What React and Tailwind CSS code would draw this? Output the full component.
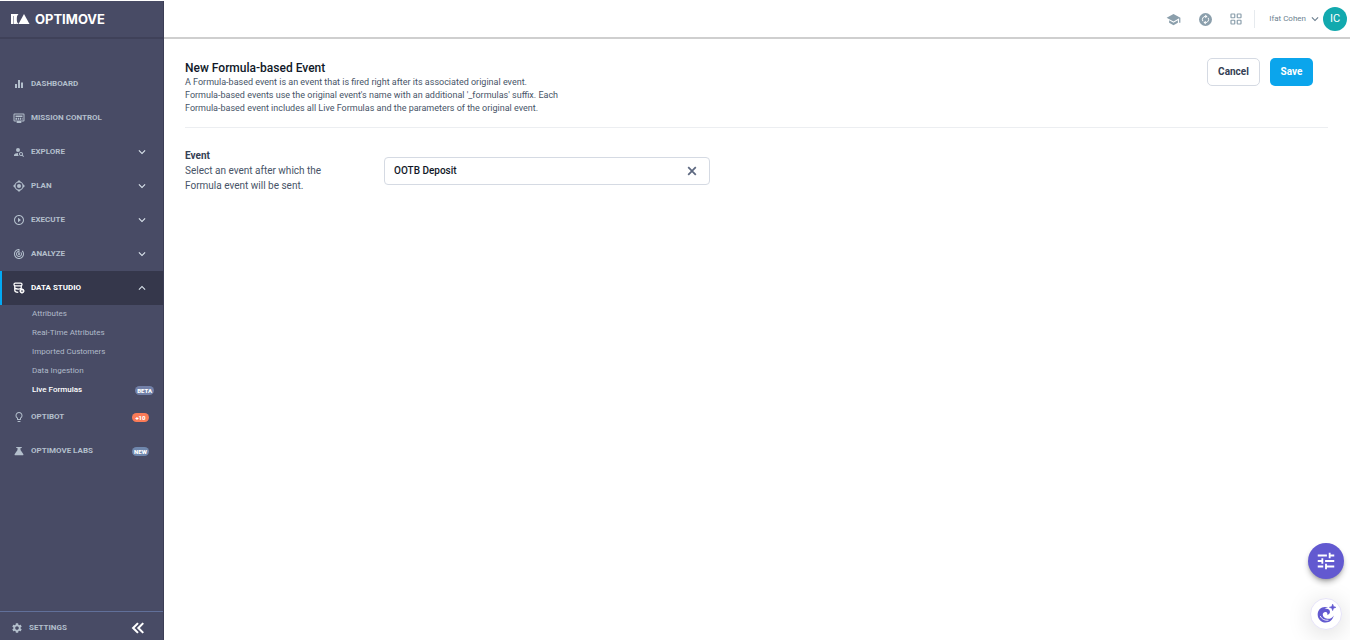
import { useState } from 'react';
import {
  MdEqualizer,
  MdKeyboardArrowDown,
  MdKeyboardArrowUp,
  MdLightbulbOutline,
  MdPersonSearch,
  MdPlayCircleOutline,
  MdSchool,
  MdSettings,
  MdTrackChanges,
  MdTune,
} from 'react-icons/md';

const MonitorIcon = ({ className }) => (
  <svg viewBox="0 0 24 24" className={className} fill="currentColor">
    <path
      fillRule="evenodd"
      d="M3 3h18a2 2 0 0 1 2 2v12a2 2 0 0 1-2 2h-5l1 3H7l1-3H3a2 2 0 0 1-2-2V5a2 2 0 0 1 2-2Zm0 2v12h18V5H3Z"
    />
    <path d="M5 7h14v3H5zM5 11.500h3.500v4H5zM10 11.500h2.500v4H10zM14 11.500h2v4h-2zM17.500 11.500H19v4h-1.500z" />
  </svg>
);

const TargetIcon = ({ className }) => (
  <svg viewBox="0 0 24 24" className={className} fill="currentColor">
    <circle cx="12" cy="12" r="4" />
    <circle cx="12" cy="12" r="8" fill="none" stroke="currentColor" strokeWidth="2.200" />
    <path d="M12 0l3.500 4h-7zM12 24l3.500-4h-7zM0 12l4-3.500v7zM24 12l-4-3.500v7z" />
  </svg>
);

const DatabaseGearIcon = ({ className }) => (
  <svg viewBox="0 0 24 24" className={className} fill="none" stroke="currentColor" strokeWidth="2.500">
    <rect x="2" y="2" width="16" height="5.500" rx="2.500" />
    <path d="M3.500 7.500v9c0 2.500 2.500 4 7 4M3.500 12c1 1.300 3.500 2 7 2 2.500 0 4.500-.4 6-1.200V7.500" />
    <circle cx="18" cy="18" r="3" strokeWidth="2.600" />
    <path
      d="M18 12.500v2M18 21.500v2M12.500 18h2M21.500 18h2M14.100 14.100l1.400 1.400M20.500 20.500l1.400 1.400M14.100 21.900l1.400-1.400M20.500 15.500l1.400-1.400"
      strokeWidth="2"
    />
  </svg>
);

const FlaskIcon = ({ className }) => (
  <svg viewBox="0 0 24 24" className={className} fill="currentColor">
    <path d="M6.500 4h11v2h-2.500v4l5.500 8c.9 1.300.4 2.500-1.200 2.500H4.700c-1.600 0-2.100-1.200-1.200-2.500L9 10V6H6.500z" />
  </svg>
);

const SyncCircleIcon = ({ className }) => (
  <svg viewBox="0 0 24 24" className={className} fill="currentColor">
    <circle cx="12" cy="12" r="12" />
    <g fill="none" stroke="white" strokeWidth="1.800">
      <path d="M7.200 15.200A5.800 5.800 0 0 1 12 6.200M16.800 8.800A5.800 5.800 0 0 1 12 17.800" />
    </g>
    <path d="M11.500 2.800l4.200 3.500-4.200 3.500zM12.500 14.200v7l-4.200-3.500z" fill="white" />
  </svg>
);

const GridIcon = ({ className }) => (
  <svg viewBox="0 0 24 24" className={className} fill="none" stroke="currentColor" strokeWidth="2.400">
    <rect x="2" y="2" width="7.500" height="7.500" rx="1" />
    <rect x="14.500" y="2" width="7.500" height="7.500" rx="1" />
    <rect x="2" y="14.500" width="7.500" height="7.500" rx="1" />
    <rect x="14.500" y="14.500" width="7.500" height="7.500" rx="1" />
  </svg>
);

const CloseIcon = ({ className }) => (
  <svg viewBox="0 0 24 24" className={className} fill="none" stroke="currentColor" strokeWidth="3">
    <path d="M5.500 5.500l13 13M18.500 5.500l-13 13" />
  </svg>
);

const CollapseIcon = ({ className }) => (
  <svg viewBox="0 0 24 24" className={className} fill="none" stroke="currentColor" strokeWidth="2.800">
    <path d="M12 5.500L5.500 12l6.500 6.500M19 5.500L12.500 12l6.500 6.500" />
  </svg>
);

const SwirlIcon = ({ className }) => (
  <svg viewBox="0 0 24 24" className={className} fill="currentColor">
    <path d="M14.500 4.300C8 1.800 2 6 2 12.500 2 18 6.300 22.200 11.600 22.200c5 0 8.800-3.400 9.600-8.400-1.500 2.800-4.200 4.300-7.400 4-3.600-.3-5.800-2.700-5.700-5.200.1-2 1.700-3.200 3.500-3 1.800.2 2.600 1.900 1.700 3.400 2.300-.3 3.700-2 3.400-4-.2-2-1.900-3.300-4.200-3.300-.8 0-1.600.1-2.300.4 1-1 2.500-1.700 4.300-1.800Z" />
    <path d="M5.200 14.800c1.500 3.400 5 5.200 9.300 4.700" fill="none" stroke="white" strokeWidth="1" strokeLinecap="round" />
    <path d="M20 0l1.100 2.900L24 4l-2.900 1.100L20 8l-1.100-2.900L16 4l2.900-1.100z" stroke="currentColor" strokeWidth=".6" />
  </svg>
);

const navItems = [
  { label: 'DASHBOARD', icon: MdEqualizer },
  { label: 'MISSION CONTROL', icon: MonitorIcon },
  { label: 'EXPLORE', icon: MdPersonSearch, expandable: true },
  { label: 'PLAN', icon: TargetIcon, expandable: true },
  { label: 'EXECUTE', icon: MdPlayCircleOutline, expandable: true },
  { label: 'ANALYZE', icon: MdTrackChanges, expandable: true },
  {
    label: 'DATA STUDIO',
    icon: DatabaseGearIcon,
    expandable: true,
    active: true,
    children: [
      { label: 'Attributes' },
      { label: 'Real-Time Attributes' },
      { label: 'Imported Customers' },
      { label: 'Data Ingestion' },
      { label: 'Live Formulas', active: true, badge: 'BETA' },
    ],
  },
  { label: 'OPTIBOT', icon: MdLightbulbOutline, badge: '+10', badgeColor: 'bg-[#fb7b57]' },
  { label: 'OPTIMOVE LABS', icon: FlaskIcon, badge: 'NEW', badgeColor: 'bg-[#6f87ad]' },
];

function NavItem({ item }) {
  const Icon = item.icon;
  const Arrow = item.active ? MdKeyboardArrowUp : MdKeyboardArrowDown;

  return (
    <li>
      <a
        href="#"
        className={`flex items-center h-[34px] pr-[14px] border-l-2 text-[8px] leading-3 font-bold ${
          item.active ? 'bg-[#35374b] border-[#03a9f4] text-white' : 'border-transparent text-[#b3bfcc]'
        }`}
      >
        <span className="w-[29px] pl-[11px] shrink-0">
          <Icon className="size-3" />
        </span>
        <span className="grow">{item.label}</span>
        {item.expandable && <Arrow className="size-[14px] text-[#dbe4ec]" />}
        {item.badge && (
          <span
            className={`min-w-[17px] px-[2px] rounded-full text-center text-[6px] leading-[9px] font-black text-white ${item.badgeColor}`}
          >
            {item.badge}
          </span>
        )}
      </a>
      {item.children && (
        <ul>
          {item.children.map((child) => (
            <li key={child.label}>
              <a
                href="#"
                className={`flex items-center justify-between h-[19px] pl-8 pr-[9px] pb-px text-[8px] leading-3 ${
                  child.active ? 'text-white font-medium' : 'text-[#b0bac9]'
                }`}
              >
                {child.label}
                {child.badge && (
                  <span className="px-[2px] rounded-full bg-[#7280a8] text-[6px] leading-[9px] font-black text-white">
                    {child.badge}
                  </span>
                )}
              </a>
            </li>
          ))}
        </ul>
      )}
    </li>
  );
}

function Sidebar() {
  return (
    <aside className="flex flex-col w-[164px] shrink-0 bg-[#484b65] border-r border-[#3c3e55]">
      <div className="flex items-center gap-[5px] h-[38px] pl-[11px] border-b-2 border-[#3f4159] text-white">
        <svg viewBox="0 0 38 20" className="w-[19px] h-[10px]" fill="currentColor">
          <path d="M0 0h15c-5 5-5 15 0 20h-4C8 15 8 9 9 4H4v16H0z" />
          <path d="M5 4h6v16H5z" />
          <path d="M26 0l11 20H15z" />
        </svg>
        <span className="font-[Inter] font-bold text-[13px] leading-4">OPTIMOVE</span>
      </div>
      <nav>
        <ul className="pt-7">
          {navItems.map((item) => (
            <NavItem key={item.label} item={item} />
          ))}
        </ul>
      </nav>
      <div className="flex items-center h-[29px] mt-auto pt-1 pl-[11px] pr-4 border-t border-[#61709a]">
        <a href="#" className="flex items-center gap-[6px] grow text-[8px] leading-3 font-bold text-[#b3bfcc]">
          <MdSettings className="size-3" />
          SETTINGS
        </a>
        <button type="button" aria-label="Collapse menu" className="text-white">
          <CollapseIcon className="size-[18px]" />
        </button>
      </div>
    </aside>
  );
}

function Header() {
  return (
    <header className="flex items-center justify-end h-[38px] pr-[3px] border-b-2 border-[#cfcfcf] text-[#8b9fac]">
      <div className="flex items-center gap-[18px]">
        <button type="button" aria-label="Academy">
          <MdSchool className="size-[15px]" />
        </button>
        <button type="button" aria-label="Sync status">
          <SyncCircleIcon className="size-[13px]" />
        </button>
        <button type="button" aria-label="Apps">
          <GridIcon className="size-3" />
        </button>
      </div>
      <div className="w-px h-[18px] ml-3 mr-[14px] bg-[#e6eaee]" />
      <button type="button" className="flex items-center gap-[2px] text-[8px] leading-3 text-[#6c7f8f]">
        Ifat Cohen
        <MdKeyboardArrowDown className="size-[14px]" />
      </button>
      <div className="flex items-center justify-center size-6 ml-px rounded-full bg-[#12a9ae] text-white text-[11px] leading-4">
        IC
      </div>
    </header>
  );
}

export default function App() {
  const [eventName, setEventName] = useState('OOTB Deposit');

  return (
    <div className="flex min-h-screen pt-px bg-white font-[Roboto,sans-serif]">
      <Sidebar />
      <div className="grow">
        <Header />
        <main className="pl-[21px] pr-[22px] pt-[19px]">
          <section className="flex items-start justify-between pb-3 pr-[15px] border-b border-[#eceef1]">
            <div className="pt-[2px]">
              <h1 className="text-[12px] leading-4 font-medium text-[#101828]">New Formula-based Event</h1>
              <p className="text-[9px] leading-[13px] text-[#475467]">
                A Formula-based event is an event that is fired right after its associated original event.
                <br />
                Formula-based events use the original event's name with an additional '_formulas' suffix. Each
                <br />
                Formula-based event includes all Live Formulas and the parameters of the original event.
              </p>
            </div>
            <div className="flex gap-[10px]">
              <button
                type="button"
                className="h-7 min-w-[53px] px-[10px] rounded-[5px] border border-[#d5dae3] text-[10px] leading-4 font-bold text-[#344054]"
              >
                Cancel
              </button>
              <button
                type="button"
                className="h-7 min-w-[43px] px-[10px] rounded-[5px] bg-[#0ba5ec] text-[10px] leading-4 font-bold text-white"
              >
                Save
              </button>
            </div>
          </section>

          <section className="flex items-start pt-5">
            <div className="w-[199px] shrink-0">
              <label htmlFor="event" className="block text-[10px] leading-[15px] font-bold text-[#344054]">
                Event
              </label>
              <p className="text-[10px] leading-[15px] text-[#475467]">
                Select an event after which the
                <br />
                Formula event will be sent.
              </p>
            </div>
            <div className="flex items-center w-[326px] h-7 mt-[9px] px-[9px] rounded-[4px] border border-[#d5dae3]">
              <input
                id="event"
                type="text"
                value={eventName}
                onChange={(e) => setEventName(e.target.value)}
                className="grow min-w-0 text-[10px] leading-4 font-medium text-[#101828] outline-none"
              />
              <button
                type="button"
                aria-label="Clear event"
                onClick={() => setEventName('')}
                className="mr-px text-[#5d6880]"
              >
                <CloseIcon className="size-[14px]" />
              </button>
            </div>
          </section>
        </main>
      </div>

      <div className="fixed right-[6px] bottom-[10px] flex flex-col items-center gap-[19px]">
        <button
          type="button"
          aria-label="Preferences"
          className="flex items-center justify-center size-9 rounded-full bg-[#6259d0] text-white shadow-md shadow-black/30"
        >
          <MdTune className="size-[22px]" />
        </button>
        <button
          type="button"
          aria-label="Assistant"
          className="flex items-center justify-center size-8 rounded-full border border-[#e6e3f8] bg-white text-[#6259d0] shadow-[0_4px_24px_rgba(0,0,0,0.15)]"
        >
          <SwirlIcon className="size-5" />
        </button>
      </div>
    </div>
  );
}
